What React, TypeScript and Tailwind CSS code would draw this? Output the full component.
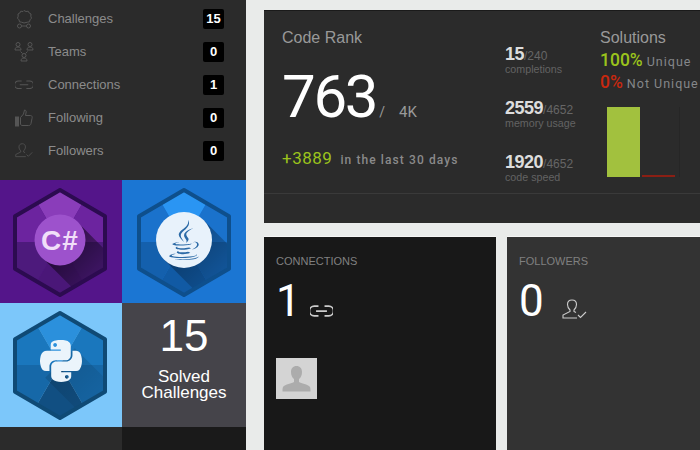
import type { ReactNode } from "react";
import { FaJava, FaPython } from "react-icons/fa";

const arial = "font-['Liberation_Sans',Arial,sans-serif]";
const roboto = "font-['Roboto',sans-serif]";

type HexColors = {
  top: string;
  upper: string;
  lower: string;
  bottom: string;
  border: string;
};

// six wedges clipped to the hexagon, then a long shadow under the icon
function Hexagon({ id, colors, shadow, shade, children }: { id: string; colors: HexColors; shadow: number; shade: number; children: ReactNode }) {
  const outline = "60,10 105,36.2 105,88.8 60,115 15,88.8 15,36.2";
  const t = shadow * 0.707;
  return (
    <svg width="122" height="123" viewBox="0 0 122 123" className="block">
      <defs>
        <clipPath id={id}>
          <polygon points={outline} />
        </clipPath>
        <linearGradient id={id + "-s"} x1="0.3" y1="0.3" x2="0.85" y2="0.85">
          <stop offset="0" stopColor="#000" stopOpacity={shade} />
          <stop offset="1" stopColor="#000" stopOpacity="0" />
        </linearGradient>
      </defs>
      <g clipPath={`url(#${id})`}>
        <polygon points="60,62 20,-7 100,-7" fill={colors.top} />
        <polygon points="60,62 100,-7 140,-7 140,62" fill={colors.upper} />
        <polygon points="60,62 20,-7 -20,-7 -20,62" fill={colors.upper} />
        <polygon points="60,62 140,62 140,131 100,131" fill={colors.lower} />
        <polygon points="60,62 -20,62 -20,131 20,131" fill={colors.lower} />
        <polygon points="60,62 100,131 20,131" fill={colors.bottom} />
        <polygon points={`${60 + t},${60 - t} ${60 - t},${60 + t} ${60 - t + 50},${60 + t + 50} ${60 + t + 50},${60 - t + 50}`} fill={`url(#${id}-s)`} />
      </g>
      <polygon points={outline} fill="none" stroke={colors.border} strokeWidth="4" strokeLinejoin="round" />
      {children}
    </svg>
  );
}

function ChallengeIcon() {
  return (
    <svg width="18" height="20" viewBox="0 0 18 20" fill="none" stroke="#555" strokeWidth="1">
      <path d="M9 1.5l2 1 2.2-.3 1 1.8 1.8 1-.2 2.2.7 2-1.5 1.600-.5 2-2.200.4L9 14l-2.300-.8-2.200-.4-.5-2L2.500 9.200l.7-2L3 5l1.800-1 1-1.800 2.200.3z" />
      <circle cx="4.500" cy="17" r="2" />
      <circle cx="13.500" cy="17" r="2" />
      <path d="M6.500 17h5" />
    </svg>
  );
}

function TeamsIcon() {
  return (
    <svg width="20" height="21" viewBox="0 0 20 21" fill="none" stroke="#555" strokeWidth="1">
      <circle cx="4" cy="3.500" r="2" />
      <path d="M1 9c0-2 1-3 3-3s3 1 3 3z" />
      <circle cx="16" cy="3.500" r="2" />
      <path d="M13 9c0-2 1-3 3-3s3 1 3 3z" />
      <path d="M6.500 10.500l2 2M13.500 10.500l-2 2" />
      <circle cx="10" cy="14.500" r="2" />
      <path d="M7 20c0-2 1-3 3-3s3 1 3 3z" />
    </svg>
  );
}

function LinkIcon({ color, width, stroke }: { color: string; width: number; stroke: number }) {
  return (
    <svg width={width} height={(width * 10) / 19} viewBox="0 0 19 10" fill="none" stroke={color} strokeWidth={stroke}>
      <path d="M7 1H3.500a3 3 0 0 0 0 8H7M12 1h3.500a3 3 0 0 1 0 8H12M5 5h9" />
    </svg>
  );
}

function ThumbIcon() {
  return (
    <svg width="18" height="18" viewBox="0 0 18 18" fill="none" stroke="#555" strokeWidth="1">
      <rect x="0.500" y="8" width="3" height="9" fill="#555" />
      <path d="M5.500 8.500l3-3.500 1-4c1.500 0 2 1.500 1.500 3l-.5 2.500h5c1.500 0 2 1.500 1.500 3l-1 5c-.3 1.500-1 2-2.500 2H8c-1.500 0-2.500-.5-2.500-1.500z" />
    </svg>
  );
}

function UserCheckIcon({ color, width }: { color: string; width: number }) {
  return (
    <svg width={width} height={(width * 20) / 25} viewBox="0 0 25 20" fill="none" stroke={color} strokeWidth="1.100">
      <path d="M10 1c-3 0-4.500 2-4.500 4.500 0 2 1 4 2.500 5.500v1.500L1 16v3h14" />
      <path d="M10 1c3 0 4.500 2 4.500 4.500 0 2-1 4-2.500 5.500v1.500l2 1" />
      <path d="M16 16l2.500 2.500L24 13" />
    </svg>
  );
}

const menu = [
  { label: "Challenges", count: 15, icon: <ChallengeIcon /> },
  { label: "Teams", count: 0, icon: <TeamsIcon /> },
  { label: "Connections", count: 1, icon: <LinkIcon color="#555" width={18} stroke={1.2} /> },
  { label: "Following", count: 0, icon: <ThumbIcon /> },
  { label: "Followers", count: 0, icon: <UserCheckIcon color="#555" width={18} /> },
];

const stats = [
  { value: "15", total: "/240", label: "completions" },
  { value: "2559", total: "/4652", label: "memory usage" },
  { value: "1920", total: "/4652", label: "code speed" },
];

export default function App() {
  return (
    <div className={`flex h-[450px] w-[700px] overflow-hidden bg-[#e9ebea] ${arial}`}>
      <aside className="flex w-[246px] shrink-0 flex-col bg-[#2b2b2b]">
        <ul className="h-[180px] pt-[2px]">
          {menu.map((item) => (
            <li key={item.label} className="flex h-[33px] items-center pr-[22px]">
              <span className="flex w-[48px] justify-center pr-[10px] pl-[9px]">{item.icon}</span>
              <span className="text-[13px] text-[#8c8c8c]">{item.label}</span>
              <span className="ml-auto flex h-[20px] w-[21px] items-center justify-center rounded-[2px] bg-black text-[13px] font-bold text-white">
                {item.count}
              </span>
            </li>
          ))}
        </ul>

        <div className="grid grid-cols-[122px_124px] grid-rows-[123px_124px_23px]">
          <div className="bg-[#54158a]">
            <Hexagon id="csharp" shadow={25} shade={0.5} colors={{ top: "#8a3dba", upper: "#6c249f", lower: "#4d1a7c", bottom: "#4a1778", border: "#2c0b50" }}>
              <circle cx="60" cy="60" r="25.500" fill="#9d52cc" />
              <text x="60" y="70" textAnchor="middle" fontSize="28" fontWeight="700" letterSpacing="1" fill="#f1def9">
                C#
              </text>
            </Hexagon>
          </div>
          <div className="bg-[#1b76d3] pl-[2px]">
            <Hexagon id="java" shadow={28} shade={0.3} colors={{ top: "#2a95f3", upper: "#1a72cc", lower: "#1460ad", bottom: "#115aa4", border: "#0e4f8c" }}>
              <circle cx="60" cy="60" r="28" fill="#e8f2fb" />
              <FaJava x="40" y="40" size={40} color="#2b6aa6" />
            </Hexagon>
          </div>
          <div className="bg-[#7cc7fa]">
            <Hexagon id="python" shadow={21} shade={0.12} colors={{ top: "#2b90dc", upper: "#1a77bd", lower: "#1668a8", bottom: "#114f82", border: "#0f4a75" }}>
              <FaPython x="37" y="34" size={48} color="#ebf4fb" />
            </Hexagon>
          </div>
          <div className="flex flex-col items-center bg-[#45444a] pt-[8px] text-white">
            <div className="text-[44px] leading-[50px]">15</div>
            <div className="mt-[8px] text-center text-[17px] leading-[16px]">
              Solved
              <br />
              Challenges
            </div>
          </div>
          <div className="bg-[#2b2b2b]" />
          <div className="bg-[#1a1a1a]" />
        </div>
      </aside>

      <main className="flex min-w-0 flex-1 flex-col gap-[13px] pt-[10px] pl-[18px]">
        <section className="flex h-[213px] flex-col border-t border-t-[#1a1a1a] bg-[#2b2b2b]">
          <div className="flex h-[183px] border-b border-b-[#3a3a3a]">
            <div className="w-[241px] pt-[17px] pl-[18px]">
              <h2 className="text-[16px] leading-[20px] text-[#999]">Code Rank</h2>
              <div className={`mt-[17px] flex items-baseline ${roboto}`}>
                <span className="text-[60px] leading-[64px] font-normal tracking-[-2.300px] text-white">763</span>
                <span className="ml-[3px] text-[14px] text-[#999]">/</span>
                <span className="ml-[14px] text-[15px] text-[#999]">4K</span>
              </div>
              <p className={`mt-[17px] flex items-baseline ${roboto}`}>
                <span className="text-[17px] font-normal tracking-[0.500px] text-[#9bc31c]">+3889</span>
                <span className="ml-[8px] text-[12px] font-medium tracking-[1.100px] text-[#8a8a8a]">in the last 30 days</span>
              </p>
            </div>

            <div className="flex w-[95px] flex-col gap-[20px] pt-[34px]">
              {stats.map((s) => (
                <div key={s.label} className="leading-none">
                  <div className="h-[19px] text-[18px] font-bold tracking-[-0.500px] text-[#ddd]">
                    {s.value}
                    <span className="text-[12px] font-normal tracking-normal text-[#666]">{s.total}</span>
                  </div>
                  <div className="h-[15px] text-[10.700px] text-[#636363]">{s.label}</div>
                </div>
              ))}
            </div>

            <div className="min-w-0 flex-1 pt-[17px]">
              <h2 className="text-[16px] leading-[20px] text-[#999]">Solutions</h2>
              <div className={`flex h-[24px] items-baseline leading-[24px] whitespace-nowrap ${roboto}`}>
                <span className="text-[17.500px] font-medium text-[#9bc31c]">100%</span>
                <span className="ml-[4px] text-[12.500px] font-normal tracking-[1px] text-[#85878a]">Unique</span>
              </div>
              <div className={`-mt-[2px] flex h-[24px] items-baseline leading-[24px] whitespace-nowrap ${roboto}`}>
                <span className="text-[17.500px] font-medium text-[#c8280f]">0%</span>
                <span className="ml-[4px] text-[12.500px] font-normal tracking-[1px] text-[#85878a]">Not Unique</span>
              </div>
              <div className="mt-[13px] ml-[7px] flex h-[70px] w-[73px] items-end gap-[2px] border-r border-r-[#262626]">
                <div className="h-full w-[33px] bg-[#a2c13e]" />
                <div className="h-[2px] w-[33px] bg-[#8b1f14]" />
              </div>
            </div>
          </div>
        </section>

        <div className="flex min-h-0 flex-1 gap-[11px]">
          <section className="w-[232px] border-t border-t-[#f5f5f5] bg-[#181818] px-[12px] pt-[18px]">
            <h3 className="text-[11px] leading-[13px] text-[#808080]">CONNECTIONS</h3>
            <div className="mt-[10px] flex items-end">
              <span className={`text-[44px] leading-[46px] font-normal text-white ${roboto}`}>1</span>
              <span className="mb-[7px] ml-[9px]">
                <LinkIcon color="#ccc" width={23} stroke={1.5} />
              </span>
            </div>
            <div className="mt-[34px] flex h-[41px] w-[41px] items-center justify-center bg-[#d4d4d4]">
              <svg width="29" height="28" viewBox="0 0 29 28" fill="#acacac">
                <path d="M14.500 1c-3.500 0-5.500 2.500-5.500 6 0 3 1 5.500 3 7v3c-2 1.500-9 2-11 5-.5 1-.5 3-.5 4.500h28c0-1.500 0-3.500-.5-4.500-2-3-9-3.500-11-5v-3c2-1.500 3-4 3-7 0-3.500-2-6-5.500-6z" />
              </svg>
            </div>
          </section>

          <section className="min-w-0 flex-1 border-t border-t-[#f5f5f5] bg-[#333] pt-[18px] pl-[12px]">
            <h3 className="text-[11px] leading-[13px] text-[#808080]">FOLLOWERS</h3>
            <div className="mt-[10px] flex items-end">
              <span className={`text-[44px] leading-[46px] font-normal text-white ${roboto}`}>0</span>
              <span className="mb-[5px] ml-[18px]">
                <UserCheckIcon color="#ccc" width={25} />
              </span>
            </div>
          </section>
        </div>
      </main>
    </div>
  );
}
